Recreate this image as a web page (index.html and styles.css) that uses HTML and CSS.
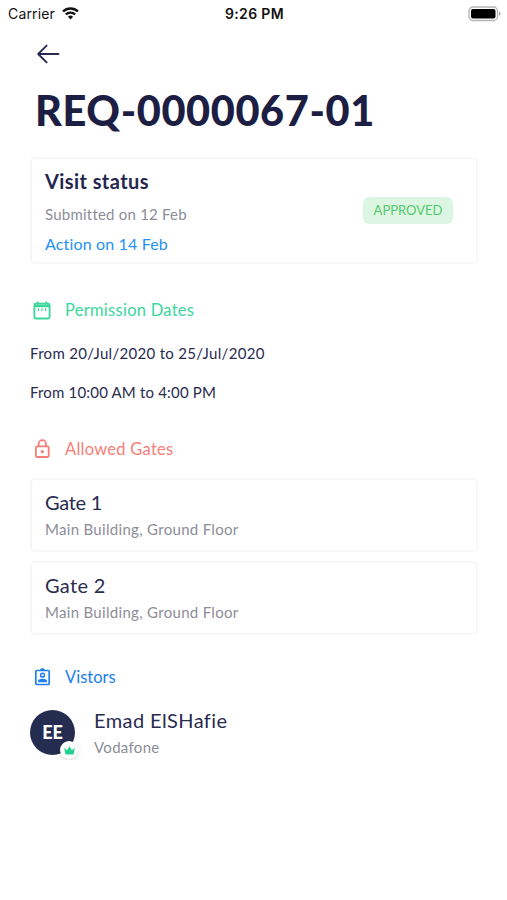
FILE: index.html
```html
<!DOCTYPE html>
<html lang="en">
<head>
<meta charset="utf-8">
<meta name="viewport" content="width=device-width">
<title>Visit request</title>
<link rel="stylesheet" href="styles.css">
</head>
<body>
<header class="status-bar">
  <div class="carrier"><span>Carrier</span>
    <svg width="17" height="13" viewBox="0 0 17 13" fill="none" stroke="#111" stroke-width="2.4"><path d="M1 4.5a10.7 10.7 0 0 1 15 0M3.8 7.5a6.8 6.8 0 0 1 9.4 0"/><path d="M8.5 12.4 5.9 9.7a3.8 3.8 0 0 1 5.2 0z" fill="#111" stroke="none"/></svg>
  </div>
  <time class="clock">9:26 PM</time>
  <svg class="battery" width="33" height="16" viewBox="0 0 33 16"><rect x="1" y="1" width="28.5" height="13.5" rx="4" fill="#fff" stroke="#b5b5b5" stroke-width="1.3"/><rect x="3" y="3" width="24.5" height="9.5" rx="2" fill="#000"/><path d="M31 5.7c2 .7 2 3.4 0 4.1z" fill="#999"/></svg>
</header>
<main class="page">
  <button class="back" aria-label="Back"><svg width="24" height="20" viewBox="0 0 24 20" fill="none" stroke="#292b55" stroke-width="1.9" stroke-linecap="round" stroke-linejoin="round"><path d="M21.5 10H1.2M9.6 1.6 1.2 10l8.4 8.4"/></svg></button>
  <h1 class="title">REQ-0000067-01</h1>
  <section class="card status-card">
    <div>
      <h2 class="status-title">Visit status</h2>
      <p class="submitted">Submitted on 12 Feb</p>
      <p class="action">Action on 14 Feb</p>
    </div>
    <span class="badge">APPROVED</span>
  </section>
  <section class="dates">
    <h3 class="heading green"><svg width="18" height="20" viewBox="0 0 18 20" fill="none" stroke="currentColor" stroke-width="1.8"><rect x="1.4" y="3.7" width="15.2" height="14.8" rx="1.5"/><path d="M1.4 5.9h15.2" stroke-width="2.6"/><path d="M4.8 1.6v3M13.2 1.6v3"/><path d="M5.4 8.2v2.8M9 8.2v2.8M12.6 8.2v2.8" stroke-width="1.2"/></svg><span>Permission Dates</span></h3>
    <p class="date">From 20/Jul/2020 to 25/Jul/2020</p>
    <p class="date hours">From 10:00 AM to 4:00 PM</p>
  </section>
  <section class="gates">
    <h3 class="heading red"><svg width="18" height="20" viewBox="0 0 18 20" fill="none" stroke="currentColor" stroke-width="1.8"><rect x="2.9" y="7.4" width="12.8" height="10.6" rx="1.2"/><path d="M5.6 7V4.9a3.7 3.7 0 0 1 7.4 0V7"/><circle cx="9.3" cy="12.7" r="1.6" fill="currentColor" stroke="none"/></svg><span>Allowed Gates</span></h3>
    <article class="card gate"><h4 class="name gate-one">Gate 1</h4><p class="place">Main Building, Ground Floor</p></article>
    <article class="card gate"><h4 class="name gate-two">Gate 2</h4><p class="place">Main Building, Ground Floor</p></article>
  </section>
  <section class="visitors">
    <h3 class="heading blue"><svg width="18" height="20" viewBox="0 0 18 20" fill="none" stroke="currentColor" stroke-width="1.7"><rect x="2.8" y="3.5" width="13.4" height="14" rx="1"/><path d="M7 3.2 9.5 1.3 12 3.2z" fill="currentColor" stroke-width="1"/><circle cx="9.5" cy="8.2" r="1.9" stroke-width="1.5"/><path d="M5 15.2v-1.1c0-3 9-3 9 0v1.1z" fill="currentColor" stroke="none"/></svg><span>Vistors</span></h3>
    <div class="visitor">
      <div class="avatar">EE<span class="crown"><svg width="11" height="9" viewBox="0 0 11 9" fill="#23d18f"><path d="m.2 1.8 2.8 2.4L5.5.2 8 4.2l2.8-2.4-1.2 6.7H1.4z"/></svg></span></div>
      <div><h4 class="name visitor-name">Emad ElSHafie</h4><p class="company">Vodafone</p></div>
    </div>
  </section>
</main>
</body>
</html>
```
FILE: styles.css
```css
* { box-sizing: border-box; margin: 0; padding: 0; }
body { background: #fff; color: #292b4f; font-family: Lato, sans-serif; font-size: 16px; font-variant-ligatures: none; white-space: nowrap; }
svg { display: block; flex: none; }
.status-bar { display: grid; grid-template-columns: 1fr auto 1fr; align-items: center; height: 27px; padding: 0 6px 0 8px; color: #111; font-family: Inter, sans-serif; font-size: 14px; }
.carrier { display: flex; align-items: center; gap: 7px; letter-spacing: .15px; }
.clock { font-weight: 600; letter-spacing: .35px; }
.battery { justify-self: end; }
.page { padding: 0 29px 0 30px; }
.back { display: block; margin: 17px 0 0 7px; border: 0; background: none; }
.title { height: 50px; margin: 21px 0 22px 5px; color: #1c1e43; font-size: 41.5px; font-weight: 900; line-height: 50px; letter-spacing: .6px; }
.card { border: 2px solid #f7f7f8; border-radius: 5px; }
.status-card { display: flex; align-items: center; justify-content: space-between; height: 107px; padding: 0 23px 0 13px; }
.status-title { padding-top: 4px; color: #24264d; font-size: 20px; font-weight: 700; line-height: 30px; letter-spacing: .42px; }
.submitted { padding-top: 3px; color: #8c8d98; font-size: 15px; line-height: 30px; letter-spacing: .22px; }
.action { color: #2490f5; font-size: 16px; line-height: 30px; letter-spacing: .15px; }
.badge { width: 90px; height: 27px; border-radius: 6px; background: #dcf6e3; color: #52ca6c; font-size: 13px; line-height: 27px; text-align: center; }
.dates { margin-top: 36px; }
.heading { display: flex; align-items: center; gap: 14px; height: 20px; padding-left: 3px; font-size: 16.5px; font-weight: 400; line-height: 20px; letter-spacing: .27px; }
.green { color: #3bd69c; }
.red { color: #f67d78; }
.blue { color: #2080ee; letter-spacing: 0; }
.date { height: 20px; margin-top: 23px; font-size: 15px; line-height: 20px; letter-spacing: .31px; }
.hours { margin-top: 19px; letter-spacing: .18px; }
.gates { margin-top: 37px; }
.gate { height: 74px; margin-top: 9px; padding: 8px 13px; }
.heading + .gate { margin-top: 19px; }
.name { font-size: 20px; font-weight: 400; line-height: 28px; }
.gate-one { letter-spacing: -.3px; }
.gate-two { letter-spacing: .3px; }
.place, .company { padding-top: 1px; color: #8c8d98; font-size: 15px; line-height: 25px; letter-spacing: .31px; }
.visitors { margin-top: 32px; }
.visitor { display: flex; gap: 19px; margin-top: 19px; }
.visitor-name { letter-spacing: .42px; }
.avatar { position: relative; width: 45px; height: 45px; margin-top: 4px; border-radius: 50%; background: #242c50; color: #fff; font-size: 18px; font-weight: 900; line-height: 45px; text-align: center; }
.crown { position: absolute; right: -3px; bottom: -4px; display: grid; place-items: center; width: 18px; height: 18px; border-radius: 50%; background: #fff; box-shadow: 0 2px 4px #0002; }
```
